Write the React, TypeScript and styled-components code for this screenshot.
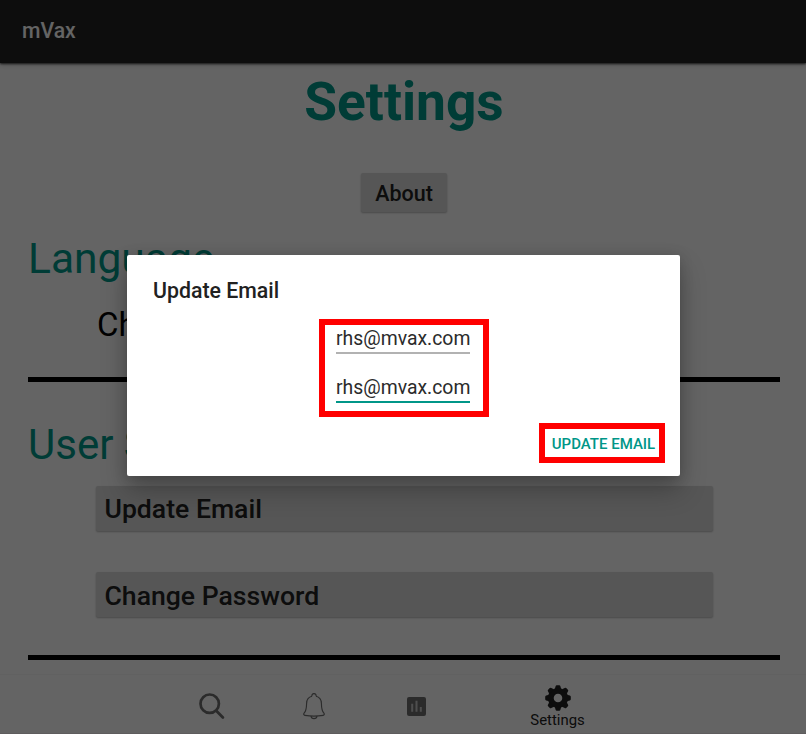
import React from "react";
import styled, { createGlobalStyle } from "styled-components";

const GlobalStyle = createGlobalStyle`
  * { box-sizing: border-box; }
  html, body { margin: 0; padding: 0; background: #fafafa; }
  body, button, input { font-family: Roboto, "Liberation Sans", sans-serif; }
`;

const Screen = styled.div`
  position: relative;
  display: flex;
  flex-direction: column;
  width: 806px;
  height: 734px;
  overflow: hidden;
  background: #fafafa;
`;

const AppBar = styled.header`
  flex: none;
  display: flex;
  align-items: center;
  height: 63px;
  padding: 0 22px 2px;
  background: #212121;
  color: #fafafa;
  font-size: 21.2px;
  font-weight: 500;
  box-shadow: 0 1px 2px rgba(0, 0, 0, 0.75), 0 2px 5px rgba(0, 0, 0, 0.2);
`;

const Content = styled.main`
  flex: 1;
  display: flex;
  flex-direction: column;
  padding: 8px 26px 0 28px;
`;

const PageTitle = styled.h1`
  margin: 0;
  height: 62px;
  line-height: 62px;
  text-align: center;
  color: #009688;
  font-size: 53.3px;
  font-weight: 700;
`;

const RaisedButton = styled.button`
  border: 0;
  border-radius: 2px;
  background: #d6d7d7;
  color: #212121;
  font-weight: 500;
  box-shadow: 0 1px 2px rgba(0, 0, 0, 0.28);
`;

const AboutButton = styled(RaisedButton)`
  align-self: center;
  width: 86px;
  height: 39px;
  margin: 40px 0 1px;
  padding: 1px 0 0;
  font-size: 21.5px;
`;

const Section = styled.section<{ $top: number; $bottom: number }>`
  display: flex;
  flex-direction: column;
  padding-top: ${(p) => p.$top}px;
  padding-bottom: ${(p) => p.$bottom}px;
  border-bottom: 5px solid #000;
`;

const SectionTitle = styled.h2<{ $size: number }>`
  margin: 0;
  height: 50px;
  line-height: 50px;
  color: #009688;
  font-size: ${(p) => p.$size}px;
  font-weight: 400;
`;

const Preference = styled.div`
  height: 40px;
  margin: 21px 0 0 69px;
  line-height: 40px;
  color: #000;
  font-size: 33px;
`;

const ButtonList = styled.div`
  display: flex;
  flex-direction: column;
  gap: 41px;
  margin: 16px 67.5px 0;
`;

const WideButton = styled(RaisedButton)<{ $drop?: number }>`
  height: 45px;
  padding: ${(p) => p.$drop ?? 0}px 9px 0;
  text-align: left;
  font-size: 26.6px;
`;

const NavBar = styled.nav`
  flex: none;
  display: flex;
  height: 60px;
  padding: 0 146px 0 160px;
  border-top: 1px solid #f3f3f3;
  border-bottom: 1px solid #ece6e8;
  background: #fafafa;
`;

const NavItem = styled.div<{ $width: number; $active?: boolean }>`
  flex: none;
  display: flex;
  flex-direction: column;
  align-items: center;
  justify-content: center;
  width: ${(p) => p.$width}px;
  padding-top: ${(p) => (p.$active ? 6 : 4)}px;
  color: ${(p) => (p.$active ? "#212121" : "#6c6c6c")};
  font-size: 14.9px;
  line-height: 18px;
  svg { display: block; }
`;

const Scrim = styled.div`
  position: absolute;
  inset: 0;
  padding: 255px 126px 0 127px;
  background: rgba(0, 0, 0, 0.6);
`;

const Dialog = styled.div`
  display: flex;
  flex-direction: column;
  height: 221px;
  padding: 24px 15px 0 26px;
  border-radius: 2px;
  background: #fff;
  box-shadow: 0 14px 26px rgba(0, 0, 0, 0.25), 0 2px 14px rgba(0, 0, 0, 0.16);
`;

const DialogTitle = styled.h3`
  margin: 0;
  height: 22px;
  line-height: 24px;
  color: #212121;
  font-size: 21.3px;
  font-weight: 500;
`;

const FieldGroup = styled.div`
  display: flex;
  flex-direction: column;
  gap: 21px;
  width: 170px;
  height: 98px;
  margin: 18px 0 0 166px;
  padding: 1px 12px 0 11px;
  border: 6px solid #f00;
`;

const EmailField = styled.input<{ $focused?: boolean }>`
  width: 134px;
  height: 28px;
  padding: 0 0 1px;
  border: 0;
  border-bottom: ${(p) => (p.$focused ? "2px solid #009688" : "2px solid #b2b2b2")};
  outline: 0;
  background: none;
  color: #2b2b2b;
  font-size: 19.4px;
`;

const ConfirmButton = styled.button`
  align-self: flex-end;
  width: 126px;
  height: 40px;
  margin-top: 6px;
  padding: 2px 0 0 3px;
  border: 6px solid #f00;
  background: #fff;
  color: #009688;
  font-size: 15px;
  font-weight: 500;
  white-space: nowrap;
`;

const SearchIcon = () => (
  <svg width="26" height="27" viewBox="0 0 26 27" fill="none" stroke="currentColor">
    <circle cx="10.7" cy="10.7" r="9.2" strokeWidth="2.7" />
    <path d="M17.5 18l6.4 6.4" strokeWidth="2.8" strokeLinecap="round" />
  </svg>
);

const BellIcon = () => (
  <svg width="22" height="27" viewBox="0 0 22 27" fill="none" stroke="currentColor" strokeWidth="1.15">
    <path d="M9 3.2C4.9 4 3.7 7 3.6 10.4c-.1 5-.6 7.800-2.500 9.800-.8.9-.3 2 .8 2.200 5.800 1 12.400 1 18.200 0 1.100-.2 1.600-1.300.8-2.200-1.900-2-2.400-4.800-2.500-9.800C18.300 7 17.100 4 13 3.200" />
    <path d="M9 3.300a2.100 2.100 0 1 1 4 0M8 23.100c.4 3.300 5.600 3.300 6 0" />
  </svg>
);

const ChartIcon = () => (
  <svg width="20" height="20" viewBox="0 0 20 20">
    <rect x="0" y="1" width="19" height="19" rx="2" fill="currentColor" />
    <path d="M5.200 7.800v8M9.500 4.800v11M13.800 11v4.800" stroke="#c4c4c4" strokeWidth="2" />
  </svg>
);

const GearIcon = () => (
  <svg width="26" height="26" viewBox="-13 -13 26 26" fill="currentColor">
    <circle r="7.200" fill="none" stroke="currentColor" strokeWidth="5.800" />
    {[0, 45, 90, 135, 180, 225, 270, 315].map((angle) => (
      <path key={angle} transform={`rotate(${angle})`} d="M-3.200-9L-2.400-11.800Q-2.200-12.800-1.200-12.800H1.200Q2.200-12.800 2.400-11.800L3.200-9z" />
    ))}
  </svg>
);

export default function App() {
  return (
    <Screen>
      <GlobalStyle />
      <AppBar>mVax</AppBar>
      <Content>
        <PageTitle>Settings</PageTitle>
        <AboutButton>About</AboutButton>
        <Section $top={21} $bottom={32}>
          <SectionTitle $size={42.5}>Language</SectionTitle>
          <Preference>Choose Language</Preference>
        </Section>
        <Section $top={38} $bottom={38}>
          <SectionTitle $size={42}>User Settings</SectionTitle>
          <ButtonList>
            <WideButton>Update Email</WideButton>
            <WideButton $drop={2}>Change Password</WideButton>
          </ButtonList>
        </Section>
      </Content>
      <NavBar>
        <NavItem $width={103}><SearchIcon /></NavItem>
        <NavItem $width={102}><BellIcon /></NavItem>
        <NavItem $width={103}><ChartIcon /></NavItem>
        <NavItem $width={179} $active>
          <GearIcon />
          <span>Settings</span>
        </NavItem>
      </NavBar>
      <Scrim>
        <Dialog role="dialog" aria-label="Update Email">
          <DialogTitle>Update Email</DialogTitle>
          <FieldGroup>
            <EmailField aria-label="New email" defaultValue="rhs@mvax.com" />
            <EmailField aria-label="Confirm email" defaultValue="rhs@mvax.com" $focused />
          </FieldGroup>
          <ConfirmButton>UPDATE EMAIL</ConfirmButton>
        </Dialog>
      </Scrim>
    </Screen>
  );
}
